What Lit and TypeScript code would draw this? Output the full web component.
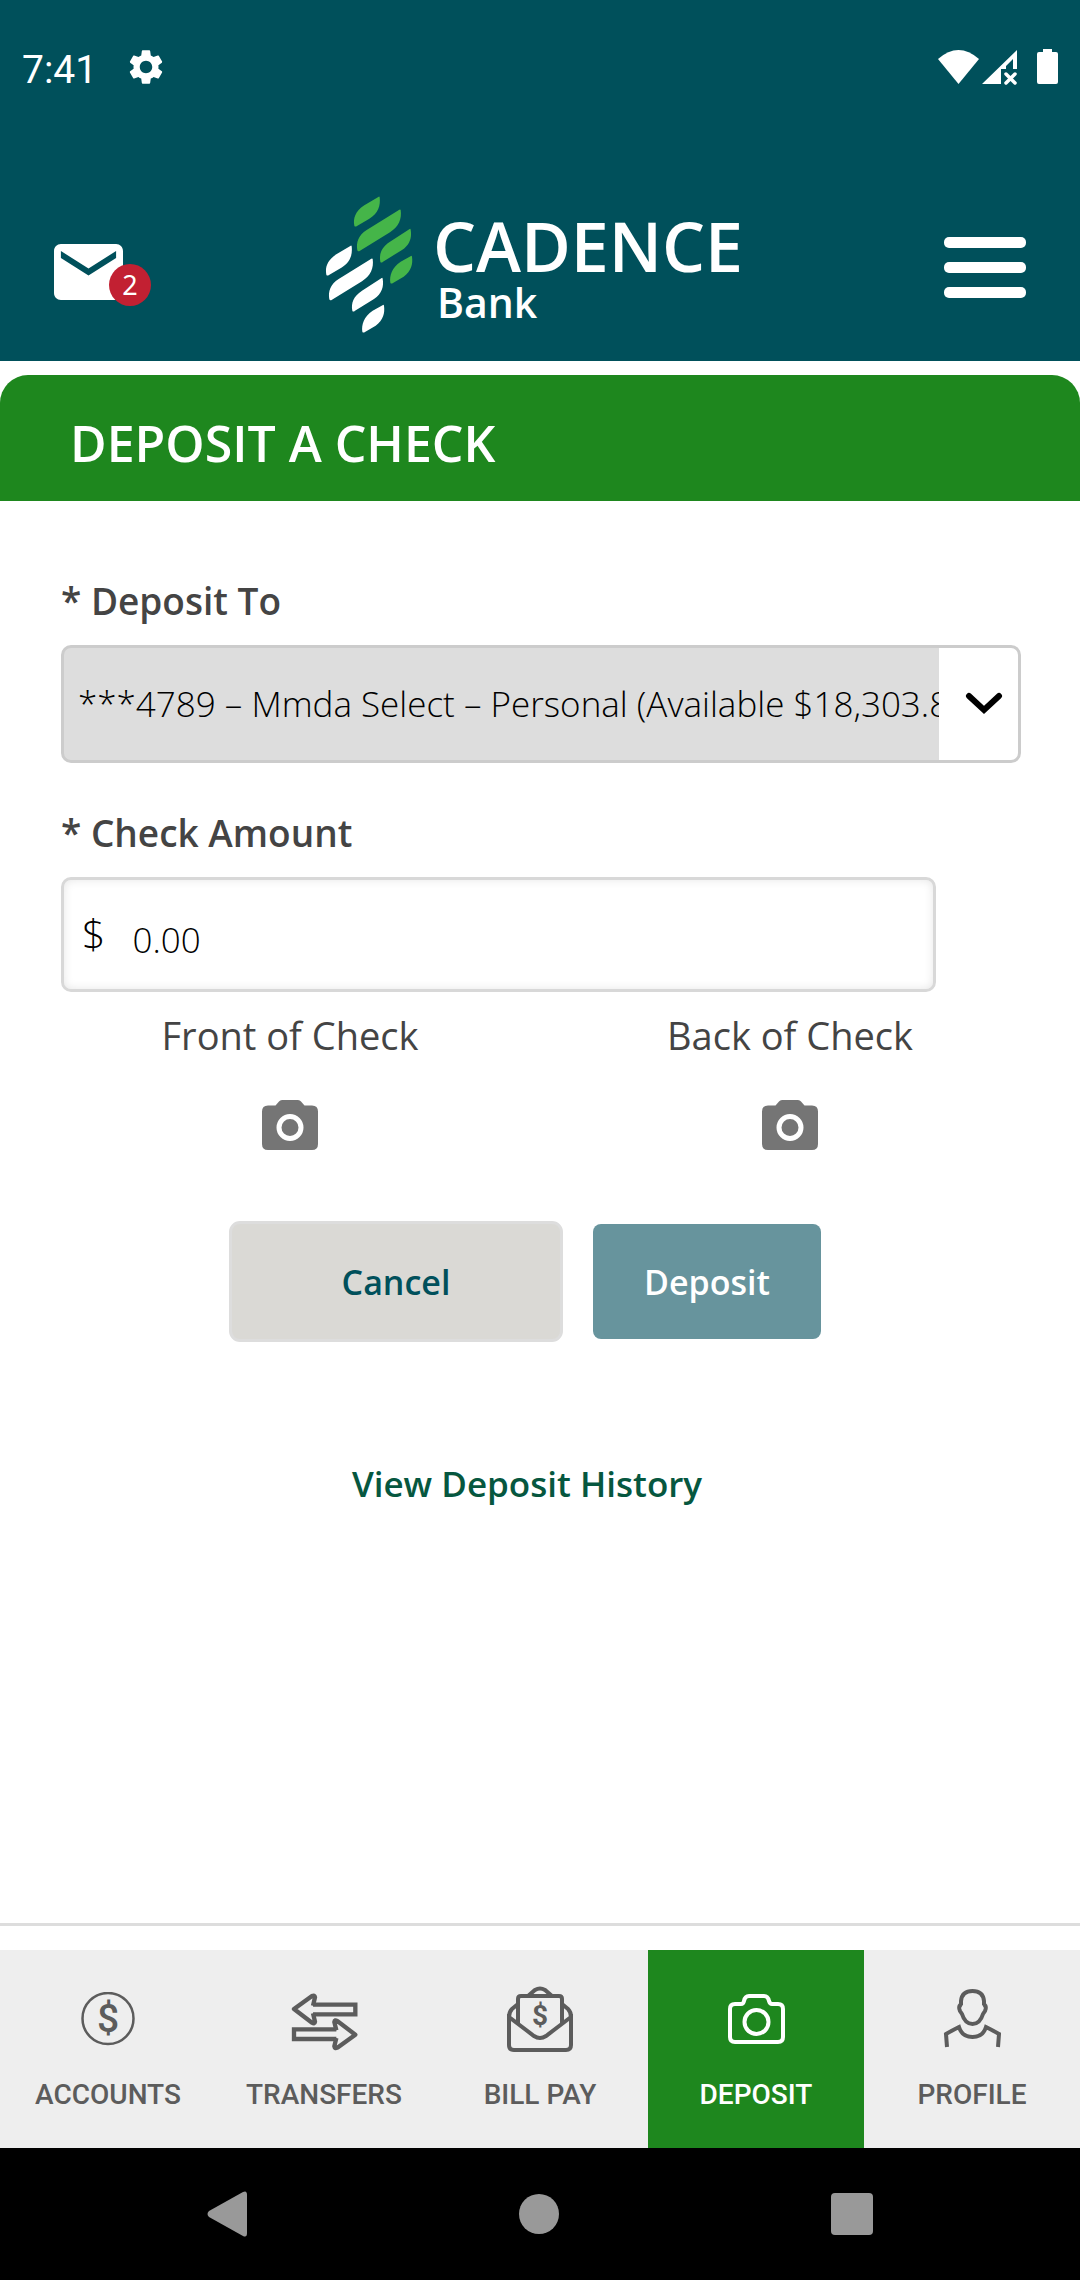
import { LitElement, html, css, svg } from "lit";
import { customElement, state } from "lit/decorators.js";
import { classMap } from "lit/directives/class-map.js";

/* Four leaves; the logo draws them once in green and once in white. */
const leaves = svg`
  <path d="M205 49 L163 74 C135 92 129 115 133 135 Q135 140 141 136 L178 114 C205 98 212 75 209 50 Q208 46 205 49Z"/>
  <path d="M268 87 L170 148 C145 164 138 185 142 209 Q144 214 150 210 L240 155 C266 138 276 115 272 88 Q271 85 268 87Z"/>
  <path d="M299 145 L240 183 C214 200 207 220 211 243 Q213 248 219 243 L276 208 C300 192 306 170 302 147 Q301 143 299 145Z"/>
  <path d="M303 226 L272 243 C246 260 238 285 241 306 Q243 311 249 307 L281 288 C304 270 309 250 306 228 Q305 224 303 226Z"/>`;

const camera = html`<svg width="56" height="50" viewBox="0 0 56 50" aria-hidden="true">
  <path fill="#757575" d="M20 0H36Q38 0 39 1.500L42.500 5.500H50Q56 5.500 56 11.500V44Q56 50 50 50H6Q0 50 0 44V11.500Q0 5.500 6 5.500H13.500L17 1.500Q18 0 20 0Z"/>
  <circle cx="28" cy="27.500" r="11" fill="none" stroke="#fff" stroke-width="5"/>
</svg>`;

const tabs = [
  {
    label: "ACCOUNTS",
    icon: html`<svg width="54" height="54" viewBox="0 0 54 54" aria-hidden="true">
      <circle cx="27" cy="26.500" r="25.500" fill="none" stroke="currentColor" stroke-width="2.500"/>
      <text class="dollar" x="27" y="40" font-size="39">$</text></svg>`,
  },
  {
    label: "TRANSFERS",
    icon: html`<svg width="67" height="64" viewBox="871 234 201 192" aria-hidden="true">
      <g fill="none" stroke="currentColor" stroke-width="13" stroke-linejoin="round">
        <path stroke-linejoin="miter" d="M937 287H1064V316H937"/>
        <path d="M937 290L943 265Q942 257 934 261L880 300L934 341Q942 346 943 338L937 313"/>
        <g transform="rotate(180 972 338.500)">
          <path stroke-linejoin="miter" d="M937 287H1064V316H937"/>
          <path d="M937 290L943 265Q942 257 934 261L880 300L934 341Q942 346 943 338L937 313"/>
        </g>
      </g></svg>`,
  },
  {
    label: "BILL PAY",
    icon: html`<svg width="66" height="66" viewBox="0 0 66 66" aria-hidden="true">
      <g fill="none" stroke="currentColor" stroke-width="4">
        <path d="M2 28V59Q2 64 7 64H59Q64 64 64 59V28"/>
        <path d="M2 31L27 50Q33 54 39 50L64 31"/>
        <path d="M11 37V13Q11 10 14 10H52Q55 10 55 13V37"/>
        <path d="M21 10L28 4Q33 1 38 4L45 10"/>
        <path d="M11 18L5 23Q2 26 2 31M55 18L61 23Q64 26 64 31"/>
      </g>
      <text class="dollar heavy" x="33" y="39" font-size="28">$</text></svg>`,
  },
  {
    label: "DEPOSIT",
    icon: html`<svg width="57" height="50" viewBox="0 0 57 50" aria-hidden="true">
      <g fill="none" stroke="currentColor" stroke-width="4">
        <path d="M7 10H13Q15.500 10 16 7Q17 2 21 2H36Q40 2 41 7Q42 10 44 10H50Q55 10 55 15V43Q55 48 50 48H7Q2 48 2 43V15Q2 10 7 10Z"/>
        <circle cx="28.500" cy="28" r="12"/>
      </g></svg>`,
  },
  {
    label: "PROFILE",
    icon: html`<svg width="58" height="60" viewBox="-1 0 58 60" aria-hidden="true">
      <g fill="none" stroke="currentColor" stroke-width="4">
        <path d="M28.500 2Q39 2 40 12V15Q43 18 41 22L39 25Q36 35 28.500 35Q21 35 18 25L16 22Q14 18 17 15V12Q18 2 28.500 2Z"/>
        <path d="M3 58L2 45Q9 41 15 38Q18 48 28.500 48Q39 48 42 38Q48 41 55 45L54 58"/>
      </g></svg>`,
  },
];

@customElement("app-root")
export class AppRoot extends LitElement {
  @state() private active = "DEPOSIT";

  static styles = css`
    :host {
      display: flex;
      flex-direction: column;
      min-height: 100vh;
      background: #fff;
      color: #444;
      font-family: "Open Sans", "Noto Sans", sans-serif;
      font-size: 38px;
      line-height: 48px;
    }
    * { box-sizing: border-box; }
    svg { display: block; }
    button {
      margin: 0;
      padding: 0;
      border: 0;
      background: none;
      color: inherit;
      font: inherit;
      cursor: pointer;
    }
    .top { background: #00505b; color: #fff; }
    .status {
      display: flex;
      align-items: center;
      justify-content: space-between;
      height: 134px;
      padding: 0 22px;
    }
    .status-left { display: flex; align-items: center; gap: 32px; }
    .clock { padding-top: 5px; font: 400 39px/48px Roboto, sans-serif; }
    .status-right { display: flex; align-items: center; }
    .brand-row {
      display: grid;
      grid-template-columns: 1fr auto 1fr;
      align-items: center;
      height: 227px;
      padding: 34px 54px 0;
    }
    .mail { position: relative; justify-self: start; padding-top: 14px; }
    .badge {
      position: absolute;
      left: 55px;
      bottom: -6px;
      width: 42px;
      height: 42px;
      border-radius: 50%;
      background: #c22032;
      font: 400 27px/42px "Noto Sans", sans-serif;
      text-align: center;
    }
    .menu { justify-self: end; padding-top: 6px; }
    .logo { display: flex; align-items: center; gap: 20px; padding-right: 12px; }
    .wordmark { display: flex; flex-direction: column; padding-top: 8px; font-weight: 600; }
    .word-main { font-size: 68px; line-height: 66px; }
    .word-sub { font-size: 41px; line-height: 46px; padding-left: 4px; }
    .banner {
      margin-top: 14px;
      padding: 35px 70px 25px;
      border-radius: 28px 28px 0 0;
      background: #1e871e;
      color: #fff;
    }
    h1 { margin: 0; font-size: 50px; font-weight: 600; line-height: 66px; }
    main { flex: 1; padding: 76px 0 40px; }
    .field { display: flex; flex-direction: column; gap: 20px; margin: 0 59px 46px 61px; }
    .field.amount { margin-bottom: 19px; margin-right: 144px; }
    .field label { font-size: 37px; font-weight: 600; }
    .select-box { position: relative; }
    select {
      display: block;
      width: 100%;
      height: 118px;
      padding: 0 79px 0 14px;
      border: 3px solid #ccc;
      border-radius: 10px;
      background: linear-gradient(to left, #fff 79px, #ddd 79px);
      appearance: none;
      color: #000;
      font: 300 35px/48px "Open Sans", sans-serif;
    }
    .chevron { position: absolute; right: 18px; top: 46px; pointer-events: none; }
    .money {
      display: flex;
      align-items: center;
      gap: 27px;
      height: 115px;
      padding: 0 18px;
      border: 3px solid #d8d8d8;
      border-radius: 10px;
      box-shadow: inset 0 0 10px #0000001a;
      color: #000;
      font-size: 35px;
      font-weight: 300;
    }
    .sign { font-size: 41px; line-height: 48px; padding-bottom: 4px; }
    .money input {
      flex: 1;
      min-width: 0;
      padding: 11px 0 0;
      border: 0;
      outline: 0;
      background: none;
      color: #000;
      font: inherit;
    }
    .sides { display: grid; grid-template-columns: 1fr 1fr; padding: 0 40px; }
    .side { display: flex; flex-direction: column; align-items: center; gap: 41px; }
    .actions {
      display: flex;
      align-items: center;
      justify-content: center;
      gap: 30px;
      margin: 71px 30px 0 0;
    }
    .cancel, .deposit { border-radius: 8px; font-size: 34px; font-weight: 600; }
    .cancel {
      width: 334px;
      height: 121px;
      border: 3px solid #ddd;
      border-radius: 11px;
      background: #dad9d5;
      color: #00505b;
    }
    .deposit { width: 228px; height: 115px; background: #67949d; color: #fff; }
    .history { display: flex; justify-content: center; margin: 118px 26px 0 0; font-size: 35px; }
    .history a { color: #06573f; font-weight: 600; text-decoration: none; }
    nav { border-top: 3px solid #ddd; padding-top: 24px; }
    .tabs { display: grid; grid-template-columns: repeat(5, 1fr); background: #eee; }
    .tab {
      display: flex;
      flex-direction: column;
      align-items: center;
      gap: 25px;
      padding: 34px 0 37px;
      color: #5c5c5c;
      font: 500 28px/32px Roboto, sans-serif;
    }
    .tab.active { background: #1e871e; color: #fff; }
    .slot { display: flex; align-items: center; height: 70px; }
    .dollar { fill: currentColor; font-family: Roboto, sans-serif; font-weight: 500; text-anchor: middle; }
    .heavy { font-weight: 700; }
    .system {
      display: flex;
      align-items: center;
      justify-content: space-between;
      height: 132px;
      padding: 0 207px;
      background: #000;
    }
  `;

  render() {
    return html`
      <header class="top">
        <div class="status">
          <div class="status-left">
            <span class="clock">7:41</span>
            <svg width="34" height="36" viewBox="2.200 2 19.600 20" aria-hidden="true">
              <path fill="#fff" d="M19.140 12.940c.04-.3.060-.610.060-.940 0-.320-.020-.640-.070-.940l2.030-1.580c.180-.140.230-.410.120-.610l-1.920-3.320c-.120-.220-.370-.290-.590-.220l-2.390.960c-.5-.380-1.030-.7-1.620-.940l-.360-2.540c-.040-.240-.240-.410-.480-.410h-3.840c-.240 0-.430.170-.470.410l-.360 2.540c-.590.240-1.130.570-1.620.940l-2.390-.960c-.220-.080-.470 0-.590.220L2.740 8.870c-.120.210-.080.470.120.610l2.030 1.580c-.050.300-.090.630-.090.940s.020.640.070.940l-2.030 1.580c-.180.140-.230.410-.120.610l1.920 3.320c.120.220.370.290.590.220l2.390-.960c.5.380 1.030.7 1.620.940l.360 2.540c.050.240.240.410.480.410h3.840c.240 0 .440-.170.470-.410l.360-2.540c.590-.240 1.130-.560 1.620-.940l2.390.960c.220.080.470 0 .590-.220l1.920-3.320c.120-.220.070-.470-.120-.610l-2.010-1.580zM12 15.600c-1.980 0-3.600-1.620-3.600-3.600s1.620-3.600 3.600-3.600 3.600 1.620 3.600 3.600-1.620 3.600-3.600 3.600z"/>
            </svg>
          </div>
          <div class="status-right">
            <svg width="120" height="36" viewBox="0 0 120 36" fill="#fff" aria-hidden="true">
              <path d="M0 10Q20.500 -8 41 10L20.500 35Z"/>
              <path fill-rule="evenodd" d="M44 35L79 1V20H75V10L68 17V20H63V35Z"/>
              <path d="M68 25L77 34M77 25L68 34" stroke="#fff" stroke-width="3.500" stroke-linecap="round"/>
              <path d="M105 0H114V3H118Q120 3 120 5V33Q120 35 118 35H101Q99 35 99 33V5Q99 3 101 3H105Z"/>
            </svg>
          </div>
        </div>
        <div class="brand-row">
          <button class="mail" aria-label="Messages">
            <svg width="69" height="56" viewBox="2 4 20 16" preserveAspectRatio="none" aria-hidden="true">
              <path fill="#fff" d="M20 4H4C2.900 4 2 4.900 2 6v12c0 1.100.9 2 2 2h16c1.100 0 2-.9 2-2V6c0-1.100-.9-2-2-2zm0 4l-8 5-8-5V6l8 5 8-5v2z"/>
            </svg>
            <span class="badge">2</span>
          </button>
          <div class="logo">
            <svg width="88" height="138" viewBox="45 46 264 414" aria-hidden="true">
              <g fill="#45b549">${leaves}</g>
              <g fill="#fff" transform="translate(-84 147)">${leaves}</g>
            </svg>
            <div class="wordmark">
              <span class="word-main">CADENCE</span>
              <span class="word-sub">Bank</span>
            </div>
          </div>
          <button class="menu" aria-label="Menu">
            <svg width="82" height="61" viewBox="0 0 82 61" fill="#fff" aria-hidden="true">
              <rect width="82" height="11" rx="5"/>
              <rect y="25" width="82" height="11" rx="5"/>
              <rect y="50" width="82" height="11" rx="5"/>
            </svg>
          </button>
        </div>
      </header>
      <div class="banner"><h1>DEPOSIT A CHECK</h1></div>
      <main>
        <div class="field">
          <label for="account">* Deposit To</label>
          <div class="select-box">
            <select id="account">
              <option>***4789 – Mmda Select – Personal (Available $18,303.8</option>
            </select>
            <svg class="chevron" width="38" height="24" viewBox="0 0 38 24" aria-hidden="true">
              <path d="M4 5L19 19L34 5" fill="none" stroke="#000" stroke-width="6" stroke-linecap="round"/>
            </svg>
          </div>
        </div>
        <div class="field amount">
          <label for="amount">* Check Amount</label>
          <div class="money">
            <span class="sign">$</span>
            <input id="amount" inputmode="decimal" value="0.00" />
          </div>
        </div>
        <div class="sides">
          <div class="side">
            <span>Front of Check</span>
            <button aria-label="Front of Check">${camera}</button>
          </div>
          <div class="side">
            <span>Back of Check</span>
            <button aria-label="Back of Check">${camera}</button>
          </div>
        </div>
        <div class="actions">
          <button class="cancel">Cancel</button>
          <button class="deposit">Deposit</button>
        </div>
        <div class="history"><a href="#history">View Deposit History</a></div>
      </main>
      <nav>
        <div class="tabs">
          ${tabs.map(
            (t) => html`<button
              class=${classMap({ tab: true, active: t.label === this.active })}
              @click=${() => (this.active = t.label)}
            >
              <span class="slot">${t.icon}</span>
              <span>${t.label}</span>
            </button>`
          )}
        </div>
      </nav>
      <footer class="system">
        <button aria-label="Back">
          <svg width="40" height="46" viewBox="0 0 40 46" fill="#999" aria-hidden="true">
            <path d="M36 1Q40 -1 40 4V42Q40 47 36 45L2 26Q-1 23 2 20Z"/>
          </svg>
        </button>
        <button aria-label="Home">
          <svg width="40" height="40" viewBox="0 0 40 40" fill="#999" aria-hidden="true"><circle cx="20" cy="20" r="20"/></svg>
        </button>
        <button aria-label="Recent apps">
          <svg width="42" height="42" viewBox="0 0 42 42" fill="#999" aria-hidden="true"><rect width="42" height="42" rx="4"/></svg>
        </button>
      </footer>
    `;
  }
}
